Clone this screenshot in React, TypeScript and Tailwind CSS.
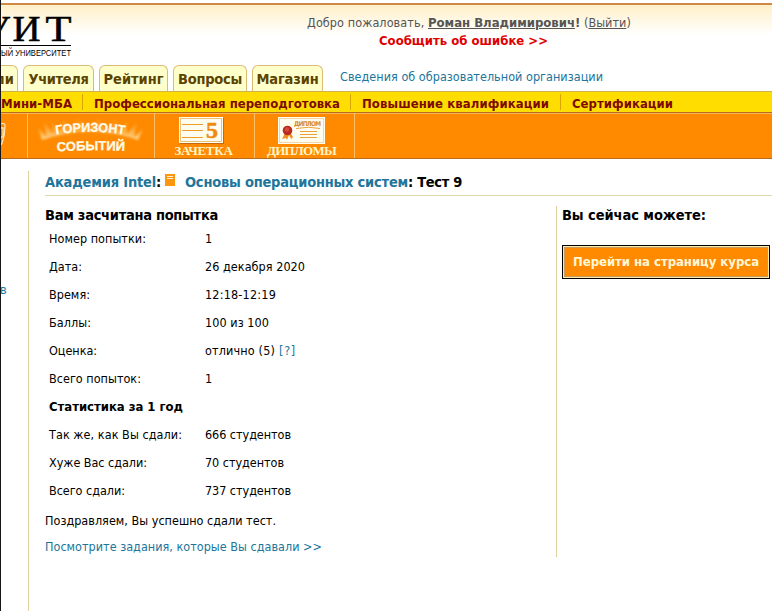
import { useLayoutEffect, useRef, useState, type ReactNode } from "react";

/** Single line of text whose tracking is adjusted so that it fills the given width. */
function Fit({ w, className = "", children }: { w: number; className?: string; children: ReactNode }) {
  const ref = useRef<HTMLSpanElement>(null);
  const [spacing, setSpacing] = useState(0);
  useLayoutEffect(() => {
    const el = ref.current;
    if (!el) return;
    const count = el.textContent?.length ?? 1;
    setSpacing((w - el.getBoundingClientRect().width) / count);
  }, [w]);
  return (
    <span ref={ref} className={`inline-block whitespace-pre ${className}`} style={{ letterSpacing: spacing }}>
      {children}
    </span>
  );
}

function Tab({ label, width, textWidth, className = "justify-center" }: { label: string; width: string; textWidth: number; className?: string }) {
  return (
    <a className={`flex h-[26px] shrink-0 items-center rounded-t-[6px] border border-b-0 border-[#dcbc74] bg-[#ffffcc] pt-[2px] text-[14.5px] font-bold leading-none text-[#5b4300] ${width} ${className}`}>
      <Fit w={textWidth}>{label}</Fit>
    </a>
  );
}

function Divider() {
  return <i className="mb-[3px] h-4 w-px shrink-0 bg-[#d9a800]" />;
}

function Row({ label, lw, value, vw, help = false }: { label: string; lw: number; value: string; vw: number; help?: boolean }) {
  return (
    <div className="flex h-7 items-center">
      <div className="w-[156px]"><Fit w={lw}>{label}</Fit></div>
      <div className="flex gap-1">
        <Fit w={vw}>{value}</Fit>
        {help && <a className="text-[#21759b]"><Fit w={17}>[?]</Fit></a>}
      </div>
    </div>
  );
}

function Logo() {
  return (
    <svg className="shrink-0" width="71" height="60" viewBox="1 5 71 60">
      <g fontFamily="Liberation Serif" fontSize="35" stroke="#000" strokeWidth=".5">
        <text x="-17" y="41" textLength="27" lengthAdjust="spacingAndGlyphs">У</text>
        <text x="12.5" y="41" textLength="28" lengthAdjust="spacingAndGlyphs">И</text>
        <text x="45.5" y="41" textLength="26" lengthAdjust="spacingAndGlyphs">Т</text>
      </g>
      <path d="M1 45.5H71" stroke="#000" />
      <text x="1" y="56" fontFamily="Liberation Sans" fontSize="8.6" textLength="70" lengthAdjust="spacingAndGlyphs">ЫЙ УНИВЕРСИТЕТ</text>
    </svg>
  );
}

function Horizon() {
  return (
    <svg width="110" height="40" viewBox="36 116 110 40">
      <defs>
        <linearGradient id="glow" x1="0" y1="0" x2="0" y2="1">
          <stop offset="0" stopColor="#ff9a20" stopOpacity=".1" />
          <stop offset="1" stopColor="#ffdf9c" stopOpacity=".95" />
        </linearGradient>
        <filter id="soft"><feGaussianBlur stdDeviation=".8" /></filter>
      </defs>
      <path d="M42 140L38 127L46 137L44 121L53 134L52 122L60 131L63 118L71 129L79 117L88 129L98 117L106 129L116 118L118 131L127 121L127 134L137 122L134 137L143 129L138 140Q91 124 42 140Z" fill="url(#glow)" filter="url(#soft)" />
      <g fontFamily="Liberation Sans" fontSize="13" fontWeight="bold">
        <path id="upper" d="M56 134.5Q91 129 127 135" fill="none" />
        <path id="lower" d="M57 151.5Q91 149 126 151" fill="none" />
        <g fill="#fffbe8" stroke="#fffbe8" strokeWidth=".3">
          <text textLength="69" lengthAdjust="spacingAndGlyphs"><textPath href="#upper">ГОРИЗОНТ</textPath></text>
          <text textLength="68" lengthAdjust="spacingAndGlyphs"><textPath href="#lower">СОБЫТИЙ</textPath></text>
        </g>
      </g>
    </svg>
  );
}

function GradeBook() {
  return (
    <svg className="mr-1" width="46" height="27" viewBox="0 0 46 27">
      <path d="M1 1H45V27H1Z" fill="#c06a14" />
      <path d="M0 0H44V26H0Z" fill="#fffdf0" />
      <path d="M1.5 1.5H42.5V24.5H1.5Z" fill="none" stroke="#e9c27a" />
      <path d="M3 7.5H24M3 13.5H24M3 20.5H24" stroke="#ef9b2b" />
      <text x="27" y="21" fill="#ee8a10" stroke="#ee8a10" strokeWidth=".5" fontFamily="Liberation Serif" fontWeight="bold" fontSize="24">5</text>
    </svg>
  );
}

function Diploma() {
  return (
    <svg width="47" height="27" viewBox="0 0 47 27">
      <path d="M0 0H47V27H0Z" fill="#fffdf0" />
      <path d="M1.5 1.5H45.5V25.5H1.5Z" fill="none" stroke="#e7b25a" strokeDasharray="1 1" />
      <text x="16" y="8.5" fill="#d98a2a" fontFamily="DejaVu Sans" fontSize="6.5" textLength="27">ДИПЛОМ</text>
      <path d="M18 11.5Q31 9 42 11.5M22 14.5H39M22 17.5H39M22 20.5H39" fill="none" stroke="#e9a23b" />
      <path d="M7 16L4 22L8 21L9 23L11 18L13 22L15 20L12 15Z" fill="#f19020" />
      <circle cx="9.5" cy="13.5" r="4.8" fill="#b92b20" />
      <circle cx="9" cy="12.5" r="2.2" fill="#d34a3c" />
    </svg>
  );
}

export default function App() {
  return (
    <div className="flex h-[611px] w-[772px] flex-col overflow-hidden border-l border-[#151515] bg-white font-['DejaVu_Sans_Condensed','DejaVu_Sans',sans-serif] text-[12.5px] leading-4 text-black [font-stretch:condensed]">
      <header className="mt-[3px] flex h-[88px] shrink-0 flex-col border-t-2 border-[#cf8a45]">
        <div className="flex h-[60px] bg-linear-to-b from-[#fff0c8] to-white to-50%">
          <Logo />
          <div className="ml-[235px] flex w-[326px] flex-col pt-[9px] text-[#555]">
            <p className="flex h-[18px] items-center whitespace-pre">
              <Fit w={121}>Добро пожаловать, </Fit>
              <Fit w={147} className="text-[13px] font-bold underline">Роман Владимирович</Fit>
              <Fit w={9} className="text-[13px] font-bold">! </Fit>
              <span>(</span><Fit w={38} className="underline">Выйти</Fit><span>)</span>
            </p>
            <a className="ml-[72px] flex h-[18px] items-center text-[13px] font-bold text-[#e00000]"><Fit w={169}>Сообщить об ошибке &gt;&gt;</Fit></a>
          </div>
        </div>
        <nav className="flex h-[26px] gap-[5px]">
          <Tab label="ли" width="w-[17px]" textWidth={19} className="justify-end rounded-tl-none border-l-0 pr-[3px]" />
          <Tab label="Учителя" width="w-[71px]" textWidth={60} />
          <Tab label="Рейтинг" width="w-[69px]" textWidth={60} />
          <Tab label="Вопросы" width="w-[74px]" textWidth={64} />
          <Tab label="Магазин" width="w-[71px]" textWidth={62} />
          <a className="ml-[12px] pt-[4px] text-[#21759b]"><Fit w={263}>Сведения об образовательной организации</Fit></a>
        </nav>
      </header>

      <nav className="flex h-[21px] shrink-0 items-center border-t border-[#d0b24c] bg-[#ffdd00] pt-[3px] text-[13px] font-bold text-[#7d0b00]">
        <div className="w-[81px] shrink-0"><Fit w={71}>Мини-МБА</Fit></div>
        <Divider />
        <div className="w-[267px] shrink-0 pl-[11px]"><Fit w={246}>Профессиональная переподготовка</Fit></div>
        <Divider />
        <div className="w-[209px] shrink-0 pl-[11px]"><Fit w={187}>Повышение квалификации</Fit></div>
        <Divider />
        <div className="pl-[11px]"><Fit w={101}>Сертификации</Fit></div>
      </nav>

      <nav className="flex h-[47px] shrink-0 border-y border-[#b96b1c] bg-[#ff8a00] font-['Liberation_Serif'] text-[13px] font-bold leading-none text-[#fff5c8] shadow-[inset_0_1px_#f7b45a]">
        <div className="w-[27px] shrink-0 border-r border-[#ffc069] pt-2">
          <svg width="8" height="30" viewBox="0 0 8 30" fill="none" stroke="#ffe5b4" strokeWidth="1.3"><path d="M0 3Q4 1 4 5Q4 14 1 22L0 24M0 7H2V15L0 17" /></svg>
        </div>
        <div className="flex w-[127px] shrink-0 justify-center border-r border-[#ffc069] pt-[3px]"><Horizon /></div>
        <div className="flex w-[100px] shrink-0 flex-col items-center border-r border-[#ffc069] pr-[2px] pt-1"><GradeBook /><Fit w={58}>ЗАЧЕТКА</Fit></div>
        <div className="flex w-[100px] shrink-0 flex-col items-center border-r border-[#ffc069] pr-[6px] pt-1"><Diploma /><Fit w={69}>ДИПЛОМЫ</Fit></div>
      </nav>

      <div className="flex grow">
        <aside className="w-[27px] shrink-0 overflow-hidden pt-[123px] text-[#21759b]"><Fit w={5} className="-ml-px">в</Fit></aside>
        <main className="mt-3 flex grow flex-col border-l border-[#e0d0a0] pl-4">
          <h1 className="flex h-[25px] shrink-0 items-center border-b border-[#e0d8a8] pb-0.5 text-[14.5px] font-bold">
            <a className="text-[#21759b]"><Fit w={111}>Академия Intel</Fit></a><Fit w={5}>:</Fit>
            <svg className="mb-1 ml-1 shrink-0" width="10" height="12" viewBox="0 0 10 12"><path d="M0 0H10V12H0Z" fill="#fa9610" /><path d="M2 2.5H8M2 4.5H8" stroke="#fff0cc" /></svg>
            <a className="ml-[10px] text-[#21759b]"><Fit w={223}>Основы операционных систем</Fit></a>
            <Fit w={54}>: Тест 9</Fit>
          </h1>
          <div className="mt-[10px] flex h-[351px] shrink-0">
            <section className="w-[511px]">
              <h2 className="flex h-[18px] items-center text-[14.5px] font-bold"><Fit w={173}>Вам засчитана попытка</Fit></h2>
              <div className="pl-1 pt-px">
                <Row label="Номер попытки:" lw={97} value="1" vw={7} />
                <Row label="Дата:" lw={33} value="26 декабря 2020" vw={100} />
                <Row label="Время:" lw={41} value="12:18-12:19" vw={71} />
                <Row label="Баллы:" lw={42} value="100 из 100" vw={64} />
                <Row label="Оценка:" lw={48} value="отлично (5)" vw={70} help />
                <Row label="Всего попыток:" lw={92} value="1" vw={7} />
                <h3 className="flex h-7 items-center text-[13px] font-bold"><Fit w={134}>Статистика за 1 год</Fit></h3>
                <Row label="Так же, как Вы сдали:" lw={133} value="666 студентов" vw={86} />
                <Row label="Хуже Вас сдали:" lw={98} value="70 студентов" vw={79} />
                <Row label="Всего сдали:" lw={76} value="737 студентов" vw={86} />
              </div>
              <p className="flex h-8 items-center"><Fit w={231}>Поздравляем, Вы успешно сдали тест.</Fit></p>
              <a className="flex h-5 items-center text-[#21759b]"><Fit w={277}>Посмотрите задания, которые Вы сдавали &gt;&gt;</Fit></a>
            </section>
            <aside className="grow border-l border-[#e0d0a0] pl-[5px]">
              <h2 className="flex h-[18px] items-center text-[14.5px] font-bold"><Fit w={144}>Вы сейчас можете:</Fit></h2>
              <button className="mt-[21px] flex h-[34px] w-[208px] items-center justify-center border border-black bg-[#ff8a00] text-[13px] font-bold text-[#fff8d8] shadow-[inset_0_0_0_1px_#ffe9a8,inset_0_0_0_2px_#c99a60]">
                <Fit w={186}>Перейти на страницу курса</Fit>
              </button>
            </aside>
          </div>
        </main>
      </div>
    </div>
  );
}
